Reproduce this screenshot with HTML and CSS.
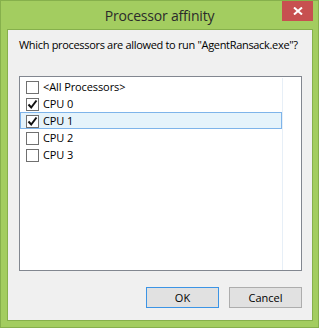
FILE: index.html
```html
<!DOCTYPE html>
<html>
<head>
<meta charset="utf-8">
<link rel="stylesheet" href="styles.css">
</head>
<body>
<div class="window">
  <div class="titlebar">
    <div class="title">Processor affinity</div>
    <div class="close">
      <svg width="10" height="8" viewBox="0 0 10 8"><path d="M1 0.5 L9 7.5 M9 0.5 L1 7.5" stroke="#fff" stroke-width="2" fill="none"/></svg>
    </div>
  </div>
  <div class="client">
    <div class="label">Which processors are allowed to run "AgentRansack.exe"?</div>
    <div class="listbox">
      <div class="list">
        <div class="row"><span class="cb"></span><span class="txt">&lt;All Processors&gt;</span></div>
        <div class="row"><span class="cb"><svg width="11" height="11" viewBox="0 0 11 11"><path d="M1.5 5.5 L4.2 8.5 L9.5 1.5" stroke="#111" stroke-width="2" fill="none"/></svg></span><span class="txt">CPU 0</span></div>
        <div class="row sel"><span class="cb"><svg width="11" height="11" viewBox="0 0 11 11"><path d="M1.5 5.5 L4.2 8.5 L9.5 1.5" stroke="#111" stroke-width="2" fill="none"/></svg></span><span class="txt">CPU 1</span></div>
        <div class="row"><span class="cb"></span><span class="txt">CPU 2</span></div>
        <div class="row"><span class="cb"></span><span class="txt">CPU 3</span></div>
      </div>
    </div>
    <div class="buttons">
      <div class="btn default">OK</div>
      <div class="btn">Cancel</div>
    </div>
  </div>
</div>
</body>
</html>
```
FILE: styles.css
```css
html, body { margin: 0; padding: 0; }
body { font-family: "Open Sans", "Noto Sans", sans-serif; }
.window {
  width: 319px; height: 328px; box-sizing: border-box;
  background: #a3cd60; border: 1px solid #86b04c;
  display: flex; flex-direction: column;
}
.titlebar {
  position: relative; height: 29px;
  display: flex; align-items: center; justify-content: center;
}
.title { font-size: 14px; color: #2b2b2b; margin-top: 1px; letter-spacing: -0.2px; }
.close {
  position: absolute; right: 5px; top: 0; width: 31px; height: 20px;
  background: #c75050; display: flex; align-items: center; justify-content: center;
}
.client {
  margin: 0 5px 6px 6px; flex: 1;
  border: 1px solid #86b04c; background: #f0f0f0;
  display: flex; flex-direction: column;
  padding: 7px 10px 12px 11px;
}
.label {
  font-size: 11px; color: #000; line-height: 15px; height: 39px;
  white-space: nowrap; letter-spacing: -0.32px;
}
.listbox {
  height: 195px; box-sizing: border-box; border: 1px solid #828790;
  background: #fff; padding: 1px 0 0 0;
}
.list { width: 262px; height: 100%; border-right: 1px solid #e7eff7; }
.row {
  height: 17px; box-sizing: border-box; display: flex; align-items: flex-start;
  padding-left: 5px; border: 1px solid transparent;
}
.row.sel { background: #e5f3fb; border-color: #7eb4ea; }
.cb {
  width: 13px; height: 13px; box-sizing: border-box; border: 1px solid #707070;
  background: #fff; display: flex; align-items: center; justify-content: center;
  margin-top: 2px; flex: none;
}
.txt { font-size: 11px; color: #000; margin-left: 4px; line-height: 16px; letter-spacing: -0.1px; }
.buttons { display: flex; justify-content: flex-end; gap: 10px; margin-top: 16px; }
.btn {
  width: 73px; height: 21px; box-sizing: border-box; border: 1px solid #adadad;
  background: #e1e1e1; font-size: 11px; color: #000;
  display: flex; align-items: center; justify-content: center;
}
.btn.default { border-color: #3c94e5; }
```
